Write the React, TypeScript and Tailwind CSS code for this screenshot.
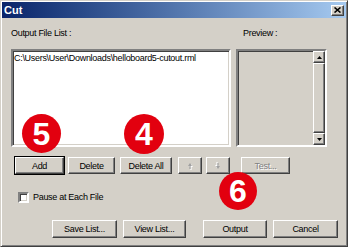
const raised =
  'border border-t-white border-l-white border-r-[#404040] border-b-[#404040] shadow-[inset_-1px_-1px_#808080]'
const sunken =
  'border-2 border-t-[#808080] border-l-[#808080] border-r-white border-b-white shadow-[inset_1px_1px_#404040,inset_-1px_-1px_#d4d0c8]'

function Btn({ label, w, h = 18, ml = 0, disabled = false, def = false }: { label: string; w: number; h?: number; ml?: number; disabled?: boolean; def?: boolean }) {
  return (
    <div
      className={`${def ? 'outline outline-1 outline-black' : ''} ${raised} bg-[#d4d0c8] flex items-center justify-center shrink-0`}
      style={{ width: w, height: h, marginLeft: ml }}
    >
      <span className={disabled ? 'text-[#808080] [text-shadow:1px_1px_#fff]' : ''}>{label}</span>
    </div>
  )
}

function ArrowBtn({ dir, ml }: { dir: 'up' | 'down'; ml: number }) {
  return (
    <div className={`${raised} bg-[#d4d0c8] w-[24px] h-[17px] flex items-center justify-center shrink-0`} style={{ marginLeft: ml }}>
      <svg width="6" height="8" viewBox="0 0 6 8" className={dir === 'down' ? 'rotate-180' : ''}>
        <path d="M3 1 L5 4 H3.6 V7 H2.4 V4 H1 Z" fill="#fff" transform="translate(1 1)" />
        <path d="M3 1 L5 4 H3.6 V7 H2.4 V4 H1 Z" fill="#a0a0a0" />
      </svg>
    </div>
  )
}

function Badge({ n, left, top, size }: { n: string; left: number; top: number; size: number }) {
  return (
    <div
      className="absolute rounded-full bg-[#e2000f] flex items-center justify-center text-white font-bold text-[32px] leading-none tracking-normal font-['Liberation_Sans',Arial,sans-serif]"
      style={{ left, top, width: size, height: size }}
    >
      {n}
    </div>
  )
}

export default function App() {
  return (
    <div className="relative w-[348px] h-[247px] overflow-hidden bg-[#d4d0c8] text-black text-[9px] leading-[12px] tracking-[-0.3px] font-['Liberation_Sans',Arial,sans-serif]">
      <div className="h-full border border-t-[#d4d0c8] border-l-[#d4d0c8] border-r-[#404040] border-b-[#404040] shadow-[inset_1px_1px_#fff,inset_-1px_-1px_#808080] p-[1px] flex flex-col">
        {/* title bar */}
        <div className="h-[16px] bg-linear-to-r from-[#0a246a] to-[#a6caf0] flex items-center pl-[2px] pr-[2px]">
          <span className="text-white font-bold text-[11px] tracking-normal">Cut</span>
          <div className={`ml-auto ${raised} bg-[#d4d0c8] w-[13px] h-[11px] flex items-center justify-center`}>
            <svg width="7" height="6" viewBox="0 0 7 6">
              <path d="M0.5 0.5 L6.5 5.5 M6.5 0.5 L0.5 5.5" stroke="#000" strokeWidth="1.6" />
            </svg>
          </div>
        </div>

        {/* labels */}
        <div className="flex mt-[9px] pl-[9px]">
          <span className="w-[232px]">Output File List :</span>
          <span>Preview :</span>
        </div>

        {/* boxes */}
        <div className="flex mt-[10px] pl-[9px]">
          <div className={`${sunken} bg-white w-[220px] h-[98px] px-[1px] pt-[1px]`}>
            <div className="whitespace-nowrap">C:\Users\User\Downloads\helloboard5-cutout.rml</div>
          </div>
          <div className={`${sunken} bg-[#d4d0c8] w-[91px] h-[98px] ml-[5px] flex justify-end`}>
            <div className="w-[12px] flex flex-col bg-[#eceae6]">
              <div className={`${raised} bg-[#d4d0c8] h-[12px] flex items-center justify-center`}>
                <svg width="5" height="3" viewBox="0 0 5 3"><path d="M2.5 0 L5 3 H0 Z" fill="#000" /></svg>
              </div>
              <div className={`${raised} bg-[#d4d0c8] flex-1`} />
              <div className={`${raised} bg-[#d4d0c8] h-[12px] flex items-center justify-center`}>
                <svg width="5" height="3" viewBox="0 0 5 3"><path d="M0 0 H5 L2.5 3 Z" fill="#000" /></svg>
              </div>
            </div>
          </div>
        </div>

        {/* list buttons */}
        <div className="flex mt-[10px] pl-[13px]">
          <Btn label="Add" w={49} h={17} def />
          <Btn label="Delete" w={47} h={17} ml={4} />
          <Btn label="Delete All" w={52} h={17} ml={5} />
          <ArrowBtn dir="up" ml={6} />
          <ArrowBtn dir="down" ml={4} />
          <Btn label="Test..." w={49} h={17} ml={11} disabled />
        </div>

        {/* checkbox */}
        <div className="flex items-center mt-[17px] pl-[16px]">
          <div className={`${sunken} bg-white w-[11px] h-[11px]`} />
          <span className="ml-[4px]">Pause at Each File</span>
        </div>

        {/* bottom buttons */}
        <div className="flex mt-[17px] pl-[50px]">
          <Btn label="Save List..." w={65} />
          <Btn label="View List..." w={63} ml={6} />
          <Btn label="Output" w={64} ml={17} />
          <Btn label="Cancel" w={65} ml={6} />
        </div>
      </div>

      <Badge n="5" left={22} top={114} size={39} />
      <Badge n="4" left={124} top={114} size={40} />
      <Badge n="6" left={219} top={172} size={38} />
    </div>
  )
}
